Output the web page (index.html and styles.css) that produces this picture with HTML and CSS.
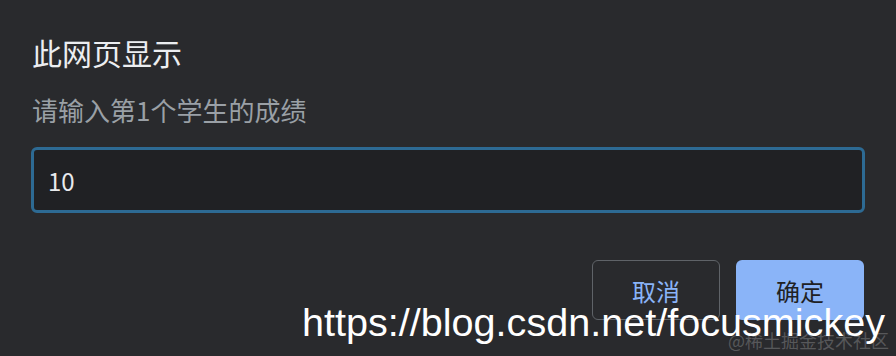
FILE: index.html
```html
<!DOCTYPE html>
<html lang="zh-CN">
<head>
  <meta charset="UTF-8" />
  <title>此网页显示</title>
  <link rel="stylesheet" href="styles.css">
</head>
<body>

  <div class="dialog">
    <h1 class="title">此网页显示</h1>
    <p class="message">请输入第1个学生的成绩</p>
    <input class="prompt-input" type="text" value="10" />

    <div class="actions">
      <button class="btn cancel">取消</button>
      <button class="btn ok">确定</button>
    </div>
  </div>

  <div class="watermark">https://blog.csdn.net/focusmickey</div>
  <div class="juejin">@稀土掘金技术社区</div>

</body>
</html>
```

FILE: styles.css
```css
body {
  margin: 0;
  background: #292a2d;
  font-family: "Noto Sans CJK SC", "Liberation Sans", sans-serif;
  width: 896px;
  height: 356px;
  overflow: hidden;
  position: relative;
}

.dialog {
  padding: 32px 32px 0 32px;
}

.title {
  margin: 0;
  font-size: 30px;
  font-weight: 400;
  line-height: 40px;
  color: #eceef1;
}

.message {
  margin: 20px 0 0 0;
  font-size: 26px;
  line-height: 36px;
  color: #9aa0a6;
}

.prompt-input {
  display: block;
  box-sizing: border-box;
  margin-top: 19px;
  width: 834px;
  height: 66px;
  margin-left: -1px;
  padding: 0 14px;
  background: #202124;
  border: 3px solid #2d6a93;
  border-radius: 6px;
  color: #e8eaed;
  font-family: "Noto Sans CJK SC", "Liberation Sans", sans-serif;
  font-size: 24px;
  outline: none;
}

.actions {
  display: flex;
  justify-content: flex-end;
  gap: 16px;
  margin-top: 47px;
  width: 832px;
}

.btn {
  width: 128px;
  height: 60px;
  border-radius: 6px;
  font-family: "Noto Sans CJK SC", sans-serif;
  font-size: 24px;
  cursor: pointer;
}

.cancel {
  background: transparent;
  border: 1px solid #5f6368;
  color: #8ab4f8;
}

.ok {
  background: #8ab4f8;
  border: none;
  color: #202124;
}

/* overlays from the screenshot */
.watermark {
  position: absolute;
  left: 302px;
  top: 299px;
  font-family: "Liberation Sans", Arial, sans-serif;
  font-size: 39.6px;
  line-height: 46px;
  color: #ffffff;
  white-space: nowrap;
}

.juejin {
  position: absolute;
  left: 728px;
  top: 328px;
  font-family: "Noto Sans CJK SC", serif;
  font-size: 18px;
  line-height: 24px;
  color: rgba(255, 255, 255, 0.22);
  white-space: nowrap;
}
```
